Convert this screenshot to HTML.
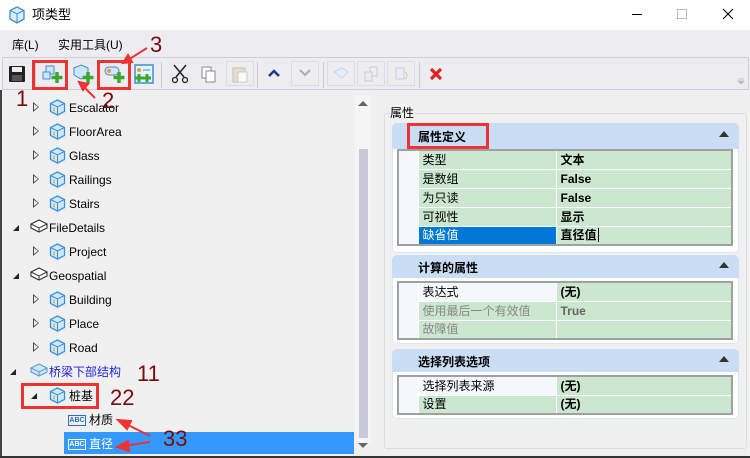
<!DOCTYPE html>
<html><head><meta charset="utf-8">
<style>
*{margin:0;padding:0;box-sizing:border-box}
body{width:750px;height:458px;overflow:hidden;background:#f0f0f0;font-family:"Liberation Sans","Noto Sans CJK SC",sans-serif;font-size:12px;color:#000;position:relative}
.abs{position:absolute}
.t{position:absolute;white-space:nowrap;font-size:12px;line-height:16px}
.tri{position:absolute;width:0;height:0}
.red{position:absolute;border:3px solid #ee3333}
.num{position:absolute;color:#7a0a0a;font-size:22px;font-family:"Liberation Sans",sans-serif;line-height:22px}
.hdr{position:absolute;left:392px;width:347px;background:#c9ddf5;border-radius:5px 5px 0 0;font-weight:bold;font-size:12px}
.box{position:absolute;left:392px;width:347px;background:#fff;border-radius:0 0 5px 5px;border:1px solid #dde6f3;border-top:none}
table{position:absolute;left:397px;width:336px;border-collapse:collapse;border:2px solid #a0a0a0;background:#f4f7fc}
td{height:19px;border:1px solid #fff;font-size:12px;padding:0 0 0 4px;white-space:nowrap;line-height:16px}
td.n{background:#cce7d0;width:138px}
td.v{background:#cce7d0;font-weight:bold}
td.g{width:20px;background:#f4f7fc;border:none;padding:0}
.up{position:absolute;right:10px;top:8px;width:0;height:0;border-left:5px solid transparent;border-right:5px solid transparent;border-bottom:6px solid #333}
</style></head><body>
<div class="abs" style="left:0;top:0;width:750px;height:30px;background:#fff"></div>
<svg class="abs" style="left:8px;top:6px" width="18" height="18" viewBox="0 0 18 18"><path d="M9 1L16 4.5V13L9 17L2 13V4.5Z" fill="#d8ecf9" stroke="#3d8fd6" stroke-width="1.3"/><path d="M2 4.5L9 8L16 4.5M9 8V17" fill="none" stroke="#3d8fd6"/></svg>
<div class="t" style="left:32px;top:7px;font-size:13px">项类型</div>
<div class="abs" style="left:632px;top:14px;width:10px;height:1px;background:#000"></div>
<div class="abs" style="left:677px;top:9px;width:10px;height:10px;border:1px solid #bbb"></div>
<svg class="abs" style="left:722px;top:8px" width="12" height="12"><path d="M1 1L11 11M11 1L1 11" stroke="#000" stroke-width="1"/></svg>
<div class="abs" style="left:0;top:30px;width:750px;height:27px;background:#edecf1"></div>
<div class="t" style="left:12px;top:37px">库(L)</div>
<div class="t" style="left:58px;top:37px">实用工具(U)</div>
<div class="abs" style="left:2px;top:57px;width:747px;height:33px;background:#edecf1;border:1px solid #cfcdd8"></div>
<svg class="abs" style="left:8px;top:65px" width="18" height="18"><rect x="1" y="1" width="16" height="16" rx="1" fill="#222"/><rect x="4" y="2" width="10" height="5" fill="#eee"/><rect x="4" y="10" width="10" height="6" fill="#555"/></svg>
<div class="abs" style="left:35px;top:62px;width:1px;height:26px;background:#ccc"></div>
<svg class="abs" style="left:42px;top:64px" width="22" height="20"><rect x="4" y="2" width="8" height="8" fill="#cfe6f8" stroke="#3d8fd6"/><rect x="1" y="8" width="7" height="7" fill="#cfe6f8" stroke="#3d8fd6"/><path d="M15 8v11M9.5 13.5h11" stroke="#3aa82e" stroke-width="3.5"/></svg>
<svg class="abs" style="left:73px;top:64px" width="22" height="20"><path d="M8 1L15 4V11L8 15L1 11V4Z" fill="#cfe6f8" stroke="#3d8fd6"/><path d="M15 8v11M9.5 13.5h11" stroke="#3aa82e" stroke-width="3.5"/></svg>
<svg class="abs" style="left:104px;top:64px" width="22" height="20"><rect x="1" y="3" width="14" height="8" rx="4" fill="#cfe6f8" stroke="#3d8fd6"/><circle cx="5" cy="7" r="2" fill="#f39a28"/><path d="M15 8v11M9.5 13.5h11" stroke="#3aa82e" stroke-width="3.5"/></svg>
<svg class="abs" style="left:134px;top:64px" width="20" height="20"><rect x="1" y="1" width="18" height="18" fill="#e7f3fc" stroke="#3d8fd6" stroke-width="1.5"/><circle cx="5" cy="6" r="2" fill="#f39a28"/><path d="M9 6h7" stroke="#3d8fd6"/><path d="M5 10v8M1 14h8M13 10v8M9 14h8" stroke="#3aa82e" stroke-width="3"/></svg>
<div class="abs" style="left:161px;top:62px;width:1px;height:26px;background:#ccc"></div>
<svg class="abs" style="left:171px;top:64px" width="18" height="20"><path d="M3 1L13 13M15 1L5 13" stroke="#222" stroke-width="1.5"/><circle cx="4" cy="16" r="2.5" fill="none" stroke="#222" stroke-width="1.3"/><circle cx="14" cy="16" r="2.5" fill="none" stroke="#222" stroke-width="1.3"/></svg>
<svg class="abs" style="left:201px;top:66px" width="16" height="18"><rect x="1" y="1" width="9" height="11" fill="#fff" stroke="#888"/><rect x="5" y="5" width="9" height="11" fill="#fff" stroke="#888"/></svg>
<div class="abs" style="left:226px;top:61px;width:28px;height:25px;border:1px solid #ddd"></div>
<svg class="abs" style="left:232px;top:65px" width="16" height="18"><rect x="1" y="3" width="12" height="14" fill="#e8dccb" stroke="#cbbfae"/><rect x="6" y="7" width="9" height="10" fill="#fafafa" stroke="#ccc"/></svg>
<div class="abs" style="left:257px;top:62px;width:1px;height:26px;background:#ccc"></div>
<svg class="abs" style="left:268px;top:68px" width="12" height="10"><path d="M1 8L6 3L11 8" fill="none" stroke="#1a3d8a" stroke-width="2.5"/></svg>
<div class="abs" style="left:291px;top:61px;width:28px;height:25px;border:1px solid #ddd"></div>
<svg class="abs" style="left:299px;top:68px" width="12" height="10"><path d="M1 2L6 7L11 2" fill="none" stroke="#aab" stroke-width="2"/></svg>
<div class="abs" style="left:323px;top:62px;width:1px;height:26px;background:#ccc"></div>
<div class="abs" style="left:327px;top:61px;width:28px;height:25px;border:1px solid #ddd"></div>
<div class="abs" style="left:357px;top:61px;width:28px;height:25px;border:1px solid #ddd"></div>
<div class="abs" style="left:387px;top:61px;width:28px;height:25px;border:1px solid #ddd"></div>
<svg class="abs" style="left:332px;top:66px" width="18" height="16"><path d="M2 6L10 2L16 6L10 12Z" fill="#e4eef8" stroke="#c5d6ea"/></svg>
<svg class="abs" style="left:363px;top:66px" width="16" height="16"><rect x="7" y="1" width="7" height="9" fill="#eee" stroke="#ccc"/><rect x="2" y="6" width="7" height="9" fill="#e4eef8" stroke="#ccc"/></svg>
<svg class="abs" style="left:393px;top:66px" width="16" height="16"><rect x="3" y="2" width="8" height="11" fill="#e4eef8" stroke="#ccc"/><path d="M12 6a4 4 0 0 1 0 7" fill="none" stroke="#ccc"/></svg>
<div class="abs" style="left:419px;top:62px;width:1px;height:26px;background:#ccc"></div>
<svg class="abs" style="left:429px;top:67px" width="14" height="14"><path d="M2 2L12 12M12 2L2 12" stroke="#e02020" stroke-width="3.2"/></svg>
<svg class="abs" style="left:737px;top:78px" width="8" height="8"><path d="M1 1h6M1 3h6L4 6Z" fill="#bbb" stroke="#bbb" stroke-width=".8"/></svg>

<div class="abs" style="left:0;top:90px;width:2px;height:368px;background:#444"></div>
<div class="abs" style="left:0;top:456px;width:750px;height:2px;background:#333"></div>
<div class="abs" style="left:355px;top:95px;width:16px;height:348px;background:#f5f5f5"></div>
<div class="abs" style="left:359px;top:149px;width:9px;height:289px;background:#c8c9d7"></div>
<div class="tri" style="left:358px;top:101px;border-left:5px solid transparent;border-right:5px solid transparent;border-bottom:5px solid #666"></div>
<div class="tri" style="left:358px;top:443px;border-left:5px solid transparent;border-right:5px solid transparent;border-top:5px solid #666"></div>
<div class="abs" style="left:64px;top:432px;width:290px;height:22px;background:#3399ff"></div>

<div id="tree"></div>
<script>
var cube='<svg width="17" height="17" viewBox="0 0 17 17"><path d="M8.5 1L15.5 4.5V12.5L8.5 16L1.5 12.5V4.5Z" fill="#cde8fa" stroke="#3d8fd6" stroke-width="1.3"/><path d="M1.5 4.5L8.5 8L15.5 4.5M8.5 8V16" fill="none" stroke="#3d8fd6"/><path d="M4 9l2 1M4 11l2 1" stroke="#f39a28"/></svg>';
var box='<svg width="18" height="14" viewBox="0 0 18 14"><path d="M1 5L9 1L17 5V9L9 13L1 9Z" fill="#fff" stroke="#333" stroke-width="1.1"/><path d="M1 5L9 9L17 5M9 9V13" fill="none" stroke="#333"/></svg>';
var bbox='<svg width="18" height="14" viewBox="0 0 18 14"><path d="M1 5L9 1L17 5V9L9 13L1 9Z" fill="#cde8fa" stroke="#5a9ad8" stroke-width="1.1"/><path d="M1 5L9 9L17 5M9 9V13" fill="none" stroke="#5a9ad8"/></svg>';
var abc=function(c){return '<div style="margin-top:4px;width:18px;height:11px;border:1px solid '+c+';color:'+c+';font:bold 7px/9px \'Liberation Sans\',sans-serif;text-align:center;letter-spacing:0">ABC</div>'};
var rows=[
[107,'o',33,cube,49,'Escalator',69],[131,'o',33,cube,49,'FloorArea',69],[155,'o',33,cube,49,'Glass',69],[179,'o',33,cube,49,'Railings',69],[203,'o',33,cube,49,'Stairs',69],
[227,'f',13,box,30,'FileDetails',49],[251,'o',33,cube,49,'Project',69],[275,'f',13,box,30,'Geospatial',49],
[299,'o',33,cube,49,'Building',69],[323,'o',33,cube,49,'Place',69],[347,'o',33,cube,49,'Road',69],
[371,'f',10,bbox,30,'桥梁下部结构',49,'#2222dd'],[395,'f',31,cube,49,'桩基',69],
[419,'',0,abc('#2a6fc4'),68,'材质',89],[443,'',0,abc('#fff'),68,'直径',89,'#fff']];
var h='';
rows.forEach(function(r){
 var y=r[0];
 if(r[1]=='o')h+='<div class="tri" style="left:'+r[2]+'px;top:'+(y-5)+'px;border-top:5px solid transparent;border-bottom:5px solid transparent;border-left:6px solid #444"></div><div class="tri" style="left:'+(r[2]+1)+'px;top:'+(y-3)+'px;border-top:3px solid transparent;border-bottom:3px solid transparent;border-left:4px solid #f0f0f0"></div>';
 if(r[1]=='f')h+='<div class="tri" style="left:'+r[2]+'px;top:'+(y-2)+'px;border-left:6px solid transparent;border-bottom:6px solid #222"></div>';
 h+='<div class="abs" style="left:'+r[4]+'px;top:'+(y-8)+'px;line-height:0">'+r[3]+'</div>';
 h+='<div class="t" style="left:'+r[6]+'px;top:'+(y-7)+'px;color:'+(r[7]||'#000')+'">'+r[5]+'</div>';
});
document.getElementById('tree').innerHTML=h;
</script>

<div class="abs" style="left:384px;top:113px;width:363px;height:336px;border:1px solid #dcdcdc;border-radius:3px"></div>
<div class="t" style="left:390px;top:105px;background:#f0f0f0;padding-right:2px">属性</div>

<div class="hdr" style="top:123px;height:26px"><span style="position:absolute;left:26px;top:5px">属性定义</span><div class="up"></div></div>
<div class="box" style="top:149px;height:104px"></div>
<table style="top:149px"><tr><td class="g"></td><td class="n">类型</td><td class="v">文本</td></tr>
<tr><td class="g"></td><td class="n">是数组</td><td class="v">False</td></tr>
<tr><td class="g"></td><td class="n">为只读</td><td class="v">False</td></tr>
<tr><td class="g"></td><td class="n">可视性</td><td class="v">显示</td></tr>
<tr><td class="g"></td><td class="n" style="background:#0078d7;color:#fff">缺省值</td><td class="v">直径值<span style="border-left:1px solid #000;margin-left:1px"></span></td></tr></table>

<div class="hdr" style="top:255px;height:23px"><span style="position:absolute;left:26px;top:4px">计算的属性</span><div class="up" style="top:7px"></div></div>
<div class="box" style="top:278px;height:66px"></div>
<table style="top:281px"><tr><td class="g"></td><td class="n" style="background:#f4f7fc">表达式</td><td class="v">(无)</td></tr>
<tr><td class="g"></td><td class="n" style="color:#888">使用最后一个有效值</td><td class="v" style="color:#666">True</td></tr>
<tr><td class="g"></td><td class="n" style="color:#888">故障值</td><td class="v"></td></tr></table>

<div class="hdr" style="top:349px;height:23px"><span style="position:absolute;left:26px;top:4px">选择列表选项</span><div class="up" style="top:7px"></div></div>
<div class="box" style="top:372px;height:47px"></div>
<table style="top:375px"><tr><td class="g"></td><td class="n" style="background:#f4f7fc">选择列表来源</td><td class="v">(无)</td></tr>
<tr><td class="g"></td><td class="n">设置</td><td class="v">(无)</td></tr></table>

<div class="red" style="left:32px;top:60px;width:36px;height:30px"></div>
<div class="red" style="left:97px;top:60px;width:34px;height:30px"></div>
<div class="red" style="left:21px;top:383px;width:78px;height:26px"></div>
<div class="red" style="left:407px;top:123px;width:82px;height:26px"></div>
<div class="num" style="left:16px;top:88px">1</div>
<div class="num" style="left:102px;top:90px">2</div>
<div class="num" style="left:150px;top:34px">3</div>
<div class="num" style="left:137px;top:363px">11</div>
<div class="num" style="left:110px;top:387px">22</div>
<div class="num" style="left:163px;top:428px">33</div>
<svg class="abs" style="left:0;top:0" width="750" height="458">
<g fill="#ee3333" stroke="#ee3333" stroke-width="2">
<path d="M95 98L82 85"/><path d="M79 82L88 84L83 90Z"/>
<path d="M147 48L128 60"/><path d="M123 63L128 55L132 62Z"/>
<path d="M150 436L124 423"/><path d="M118 420L131 421L127 429Z"/>
<path d="M150 442L124 446"/><path d="M117 447L128 441L129 451Z"/>
</g></svg>
</body></html>
